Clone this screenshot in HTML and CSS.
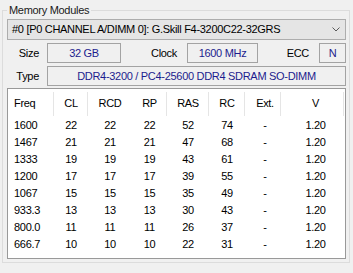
FILE: index.html
```html
<!DOCTYPE html>
<html>
<head>
<meta charset="utf-8">
<link rel="stylesheet" href="styles.css">
</head>
<body>
<fieldset class="group">
  <legend class="legend">Memory Modules</legend>
  <div class="select">
    <span class="select-text">#0 [P0 CHANNEL A/DIMM 0]: G.Skill F4-3200C22-32GRS</span>
    <svg class="chev" width="8" height="5" viewBox="0 0 8 5"><path d="M0.5 0.5 L4 4 L7.5 0.5" fill="none" stroke="#5a5a5a" stroke-width="1"/></svg>
  </div>
  <div class="row">
    <span class="label lbl-first">Size</span>
    <span class="box box-size">32 GB</span>
    <span class="label lbl-clock">Clock</span>
    <span class="box box-clock">1600 MHz</span>
    <span class="label lbl-ecc">ECC</span>
    <span class="box box-ecc">N</span>
  </div>
  <div class="row">
    <span class="label lbl-first">Type</span>
    <span class="box box-type">DDR4-3200 / PC4-25600 DDR4 SDRAM SO-DIMM</span>
  </div>
  <div class="list">
    <table class="spd">
      <colgroup>
        <col class="c-freq"><col class="c-cl"><col class="c-rcd"><col class="c-rp"><col class="c-ras"><col class="c-rc"><col class="c-ext"><col class="c-v">
      </colgroup>
      <thead>
        <tr><th class="left">Freq</th><th>CL</th><th class="nodiv">RCD</th><th>RP</th><th>RAS</th><th>RC</th><th class="ext">Ext.</th><th class="v">V</th></tr>
      </thead>
      <tbody>
        <tr><td class="left">1600</td><td>22</td><td>22</td><td>22</td><td>52</td><td>74</td><td class="ext">-</td><td class="v">1.20</td></tr>
        <tr><td class="left">1467</td><td>21</td><td>21</td><td>21</td><td>47</td><td>68</td><td class="ext">-</td><td class="v">1.20</td></tr>
        <tr><td class="left">1333</td><td>19</td><td>19</td><td>19</td><td>43</td><td>61</td><td class="ext">-</td><td class="v">1.20</td></tr>
        <tr><td class="left">1200</td><td>17</td><td>17</td><td>17</td><td>39</td><td>55</td><td class="ext">-</td><td class="v">1.20</td></tr>
        <tr><td class="left">1067</td><td>15</td><td>15</td><td>15</td><td>35</td><td>49</td><td class="ext">-</td><td class="v">1.20</td></tr>
        <tr><td class="left">933.3</td><td>13</td><td>13</td><td>13</td><td>30</td><td>43</td><td class="ext">-</td><td class="v">1.20</td></tr>
        <tr><td class="left">800.0</td><td>11</td><td>11</td><td>11</td><td>26</td><td>37</td><td class="ext">-</td><td class="v">1.20</td></tr>
        <tr><td class="left">666.7</td><td>10</td><td>10</td><td>10</td><td>22</td><td>31</td><td class="ext">-</td><td class="v">1.20</td></tr>
      </tbody>
    </table>
  </div>
</fieldset>
</body>
</html>
```
FILE: styles.css
```css
html, body {
  margin: 0;
  padding: 0;
  background: #f0f0f0;
}
body {
  font-family: "Liberation Sans", Arial, sans-serif;
  font-size: 11px;
  letter-spacing: -0.3px;
  color: #000;
}
.group {
  box-sizing: border-box;
  width: 348px;
  margin: 4px 0 0 2px;
  padding: 0 3px 3px 4px;
  border: 1px solid #dcdcdc;
  min-width: 0;
}
.legend {
  padding: 0 2px;
  line-height: 13px;
  color: #1a1a1a;
}
.select {
  margin-top: 2px;
  box-sizing: border-box;
  height: 21px;
  border: 1px solid #adadad;
  background: #e5e5e5;
  display: flex;
  align-items: center;
  justify-content: space-between;
  padding: 0 5px 0 4px;
}
.select-text {
  line-height: 13px;
}
.chev {
  display: block;
}
.row {
  display: flex;
  align-items: center;
  margin-top: 3px;
  height: 20px;
}
.label {
  box-sizing: border-box;
  text-align: right;
  line-height: 13px;
}
.lbl-first {
  width: 32px;
  margin-right: 8px;
}
.lbl-clock {
  width: 66px;
  padding-right: 10px;
}
.lbl-ecc {
  width: 61px;
  padding-right: 10px;
}
.box {
  box-sizing: border-box;
  height: 20px;
  border: 1px solid #a3a3a3;
  display: flex;
  align-items: center;
  justify-content: center;
  color: #1c1c8e;
}
.box-size { width: 74px; }
.box-clock { width: 71px; }
.box-ecc { width: 27px; }
.box-type { flex: 1; }
.list {
  margin-top: 2px;
  box-sizing: border-box;
  height: 171px;
  border: 1px solid #999;
  background: #fff;
  overflow: hidden;
}
.spd {
  border-collapse: collapse;
  table-layout: fixed;
  width: 336px;
}
.c-freq { width: 46px; }
.c-cl { width: 34px; }
.c-rcd { width: 44px; }
.c-rp { width: 35px; }
.c-ras { width: 42px; }
.c-rc { width: 36px; }
.c-ext { width: 36px; }
.c-v { width: 63px; }
.spd th {
  position: relative;
  height: 27px;
  padding: 0;
  font-weight: normal;
  text-align: center;
  vertical-align: middle;
}
.spd th::after {
  content: "";
  position: absolute;
  right: 0;
  top: 3px;
  bottom: 0;
  width: 1px;
  background: #e5e5e5;
}
.spd th.nodiv::after {
  display: none;
}
.spd td {
  height: 17px;
  padding: 0;
  text-align: center;
  vertical-align: middle;
  white-space: nowrap;
}
.spd .left {
  text-align: left;
  padding-left: 6px;
}
.spd .ext { padding-left: 4px; }
.spd .v { padding-left: 6px; }
```
